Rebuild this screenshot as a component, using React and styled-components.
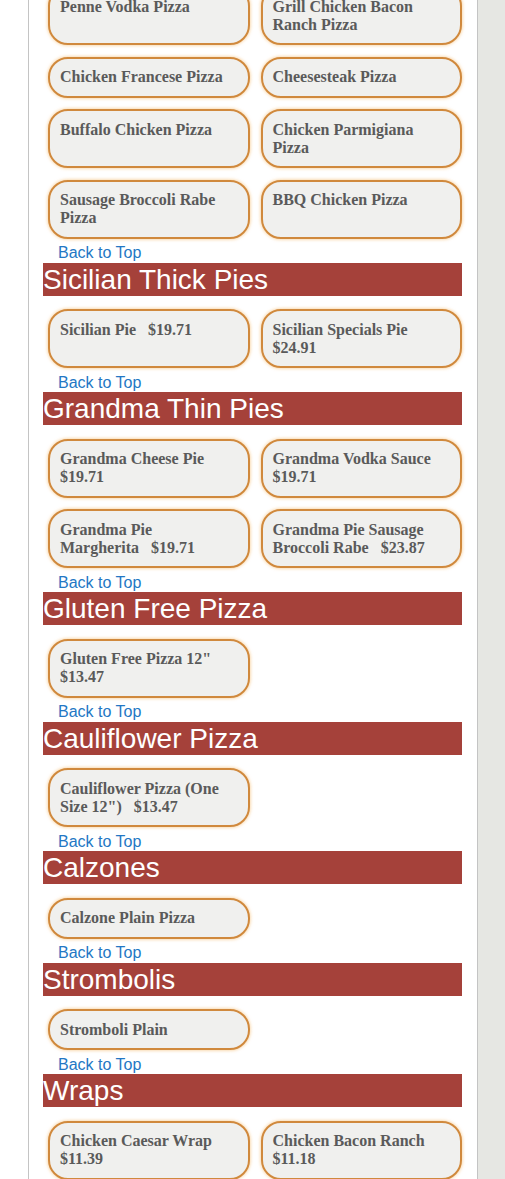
import React from 'react';
import styled, { createGlobalStyle } from 'styled-components';

const GlobalStyle = createGlobalStyle`
  html, body {
    margin: 0;
    padding: 0;
    background: #ffffff;
  }
  body {
    overflow: hidden;
  }
`;

const Page = styled.div`
  display: flex;
  align-items: stretch;
  min-height: 1200px;
  margin-top: -14px;
`;

const Gutter = styled.div`
  width: 28px;
  flex-shrink: 0;
  background: #ffffff;
`;

const Main = styled.div`
  width: 419px;
  flex-shrink: 0;
  border-left: 1px solid #c4c4c4;
  border-right: 1px solid #c4c4c4;
  padding: 0 15px 0 14px;
  background: #ffffff;
`;

const Sidebar = styled.div`
  flex: 1;
  background: #e6e7e3;
`;

const SectionHeader = styled.h2`
  margin: 0;
  height: 33px;
  line-height: 33px;
  background: #a5413a;
  color: #ffffff;
  font-family: "Liberation Sans", Arial, sans-serif;
  font-weight: normal;
  font-size: 28px;
  white-space: nowrap;
  overflow: hidden;
`;

const Grid = styled.div`
  display: grid;
  grid-template-columns: 1fr 1fr;
  column-gap: 11px;
  row-gap: 11.5px;
  padding: ${props => (props.$first ? '0' : '13.5px')} 0 5.5px 5px;
`;

const Card = styled.div`
  border: 2px solid #d0893d;
  border-radius: 20px;
  background: #f0f0ee;
  box-shadow: 0 0 3px 1px rgba(247, 196, 130, 0.6);
  padding: 9.5px 10px 9.5px;
  color: #5a5a5a;
  font-family: "Liberation Serif", "Times New Roman", serif;
  font-weight: bold;
  font-size: 16px;
  line-height: 18px;
`;

const BackLink = styled.a`
  display: block;
  padding-left: 15px;
  color: #2377c4;
  font-family: "Liberation Sans", Arial, sans-serif;
  font-size: 16px;
  line-height: 18.5px;
  text-decoration: none;
`;

const sections = [
  {
    title: null,
    items: [
      ['Penne Vodka Pizza'],
      ['Grill Chicken Bacon Ranch Pizza'],
      ['Chicken Francese Pizza'],
      ['Cheesesteak Pizza'],
      ['Buffalo Chicken Pizza'],
      ['Chicken Parmigiana Pizza'],
      ['Sausage Broccoli Rabe Pizza'],
      ['BBQ Chicken Pizza']
    ]
  },
  {
    title: 'Sicilian Thick Pies',
    items: [
      ['Sicilian Pie', '$19.71'],
      ['Sicilian Specials Pie', '$24.91']
    ]
  },
  {
    title: 'Grandma Thin Pies',
    items: [
      ['Grandma Cheese Pie', '$19.71'],
      ['Grandma Vodka Sauce', '$19.71'],
      ['Grandma Pie Margherita', '$19.71'],
      ['Grandma Pie Sausage Broccoli Rabe', '$23.87']
    ]
  },
  {
    title: 'Gluten Free Pizza',
    items: [['Gluten Free Pizza 12"', '$13.47']]
  },
  {
    title: 'Cauliflower Pizza',
    items: [['Cauliflower Pizza (One Size 12")', '$13.47']]
  },
  {
    title: 'Calzones',
    items: [['Calzone Plain Pizza']]
  },
  {
    title: 'Strombolis',
    items: [['Stromboli Plain']]
  },
  {
    title: 'Wraps',
    items: [
      ['Chicken Caesar Wrap', '$11.39'],
      ['Chicken Bacon Ranch', '$11.18']
    ]
  }
];

const MenuCard = ({ name, price }) => (
  <Card>
    {name}
    {price ? '\u00a0\u00a0 ' + price : null}
  </Card>
);

const App = () => {
  return (
    <>
      <GlobalStyle />
      <Page>
        <Gutter />
        <Main>
          {sections.map((section, i) => (
            <React.Fragment key={i}>
              {section.title && <SectionHeader>{section.title}</SectionHeader>}
              <Grid $first={!section.title}>
                {section.items.map(([name, price]) => (
                  <MenuCard key={name} name={name} price={price} />
                ))}
              </Grid>
              {i < sections.length - 1 && <BackLink href="#top">Back to Top</BackLink>}
            </React.Fragment>
          ))}
        </Main>
        <Sidebar />
      </Page>
    </>
  );
};

export default App;
